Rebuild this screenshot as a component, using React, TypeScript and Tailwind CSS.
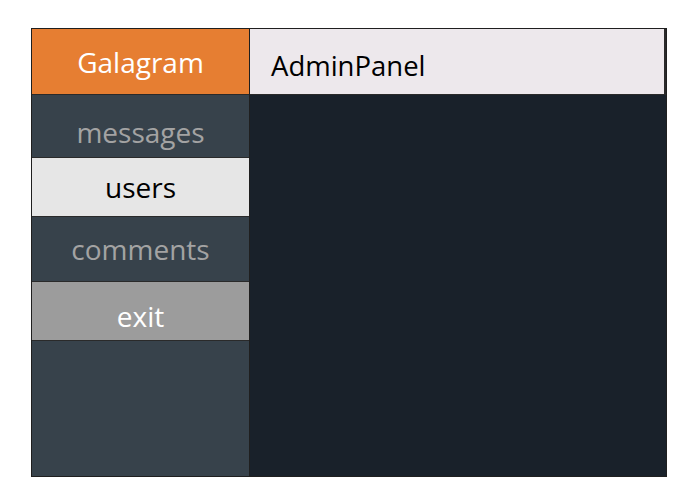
export default function App() {
  const font = { fontFamily: '"Open Sans", "DejaVu Sans", sans-serif' };
  return (
    <div className="w-[700px] h-[500px] bg-white pt-[28px] pl-[31px]" style={font}>
      <div className="flex w-[636px] h-[449px] border border-[#1f1f1f]">
        {/* sidebar */}
        <div className="w-[218px] flex flex-col bg-[#37424b] border-r border-[#1f1f1f]">
          <div className="h-[66px] bg-[#e67e32] border-b border-[#2a2a2a] flex items-center justify-center text-white text-[28px]">
            Galagram
          </div>
          <div className="h-[63px] border-b border-[#2a2a2a] flex items-center justify-center text-[#a3a3a3] text-[28px] pt-[12px]">
            messages
          </div>
          <div className="h-[59px] bg-[#e6e6e6] border-b border-[#2a2a2a] flex items-center justify-center text-black text-[28px]">
            users
          </div>
          <div className="h-[65px] border-b border-[#2a2a2a] flex items-center justify-center text-[#a3a3a3] text-[28px]">
            comments
          </div>
          <div className="h-[59px] bg-[#9c9c9c] border-b border-[#2a2a2a] flex items-center justify-center text-white text-[28px] pt-[10px]">
            exit
          </div>
          <div className="flex-1" />
        </div>
        {/* main */}
        <div className="flex-1 flex flex-col bg-[#19212a]">
          <div className="h-[66px] bg-[#ede8ec] border-b border-r-2 border-[#2a2a2a] flex items-center pl-[21px] pt-[8px] text-black text-[27.5px]">
            AdminPanel
          </div>
          <div className="flex-1" />
        </div>
      </div>
    </div>
  );
}
